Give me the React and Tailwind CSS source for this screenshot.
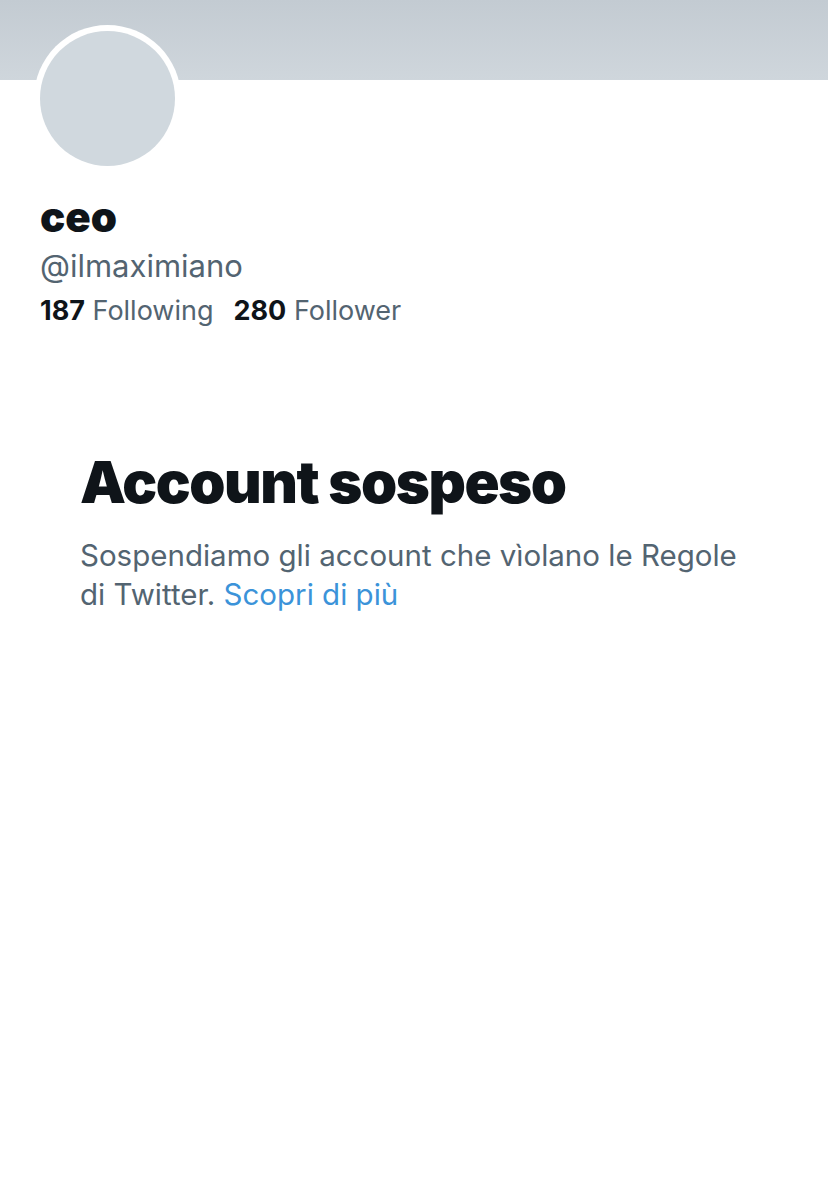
export default function App() {
    return (
        <div className="w-[828px] h-[1200px] bg-white" style={{ fontFamily: "Inter, 'Liberation Sans', sans-serif" }}>
            {/* Banner */}
            <div className="h-[80px] bg-gradient-to-b from-[#c3cbd2] to-[#cfd6dc]" />

            {/* Avatar */}
            <div className="ml-[34px] -mt-[55px] w-[147px] h-[147px] rounded-full bg-white p-[6px]">
                <div className="w-full h-full rounded-full bg-[#d0d8de]" />
            </div>

            {/* Profile info */}
            <div className="px-[40px] mt-[21px]">
                <div className="text-[42px] leading-[48px] font-black text-[#0f1419]">ceo</div>
                <div className="mt-[6px] text-[31px] leading-[38px] text-[#536471]">@ilmaximiano</div>
                <div className="mt-[9px] flex gap-[20px] text-[27px] leading-[34px]">
                    <span>
                        <span className="font-bold text-[#0f1419]">187</span>{" "}
                        <span className="text-[#536471]">Following</span>
                    </span>
                    <span>
                        <span className="font-bold text-[#0f1419]">280</span>{" "}
                        <span className="text-[#536471]">Follower</span>
                    </span>
                </div>
            </div>

            {/* Suspended notice */}
            <div className="px-[80px] mt-[120px]">
                <h1 className="text-[58px] leading-[68px] font-black text-[#0f1419] tracking-tight">
                    Account sospeso
                </h1>
                <p className="mt-[20px] text-[29.5px] leading-[39px] text-[#536471] max-w-[690px]">
                    Sospendiamo gli account che vìolano le Regole di Twitter.{" "}
                    <span className="text-[#3b93d9]">Scopri di più</span>
                </p>
            </div>
        </div>
    );
}
